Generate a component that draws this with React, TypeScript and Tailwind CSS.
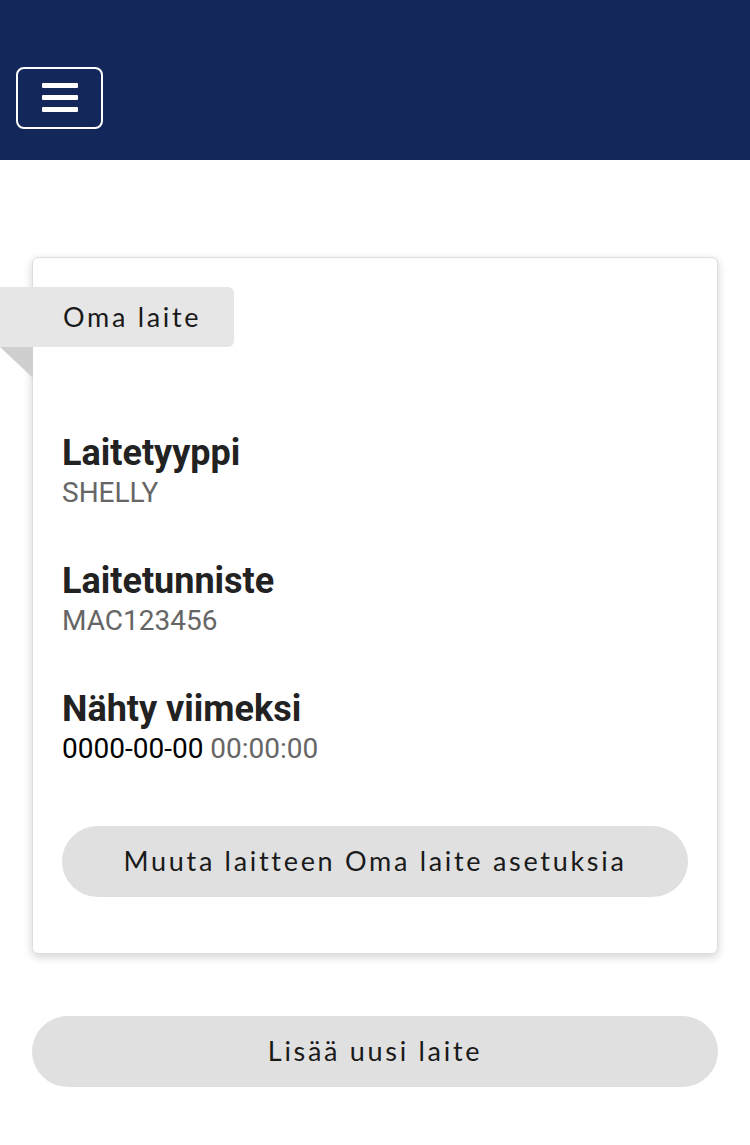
import React from 'react';

const fields = [
    {label: 'Laitetyyppi', value: 'SHELLY'},
    {label: 'Laitetunniste', value: 'MAC123456'},
];

const btnFont = "font-['Lato','Open_Sans',sans-serif]";

const App = () => {
    return (
        <div className="min-h-[1145px] bg-white font-['Roboto',sans-serif]">
            {/* Header */}
            <header className="h-[160px] bg-[#14275a] flex items-center pl-4 pt-[35px]">
                <button className="w-[87px] h-[62px] border-2 border-white rounded-lg flex flex-col items-center justify-center gap-[7px]">
                    <span className="block w-[36px] h-[5px] bg-white rounded-[1px]"/>
                    <span className="block w-[36px] h-[5px] bg-white rounded-[1px]"/>
                    <span className="block w-[36px] h-[5px] bg-white rounded-[1px]"/>
                </button>
            </header>

            <main className="px-[32px] pt-[97px]">
                {/* Card */}
                <div className="bg-white border border-[#dedede] rounded-md shadow-[0_3px_10px_rgba(0,0,0,0.18)] pt-[29px] pb-[56px]">
                    <div className="-ml-[33px]">
                        <div className={`w-[234px] h-[60px] bg-[#e6e6e6] rounded-r-md flex items-center pl-[63px] text-[27px] tracking-[0.1em] text-[#1a1a1a] ${btnFont}`}>
                            Oma laite
                        </div>
                        <div className="w-0 h-0 border-t-[31px] border-t-[#cfcfcf] border-l-[33px] border-l-transparent"/>
                    </div>

                    <div className="px-[29px] mt-[52px]">
                        {fields.map((f) => (
                            <div key={f.label} className="mb-[48px]">
                                <div className="text-[36px] leading-[46px] font-bold text-[#222]">{f.label}</div>
                                <div className="text-[28px] leading-[34px] text-[#666]">{f.value}</div>
                            </div>
                        ))}
                        <div>
                            <div className="text-[36px] leading-[46px] font-bold text-[#222]">Nähty viimeksi</div>
                            <div className="text-[28px] leading-[34px] text-black">
                                0000-00-00 <span className="text-[#666]">00:00:00</span>
                            </div>
                        </div>

                        <button className={`mt-[60px] w-full h-[71px] rounded-full bg-[#e0e0e0] text-[27px] tracking-[0.1em] text-[#1a1a1a] ${btnFont}`}>
                            Muuta laitteen Oma laite asetuksia
                        </button>
                    </div>
                </div>

                <button className={`mt-[62px] w-full h-[71px] rounded-full bg-[#e0e0e0] text-[27px] tracking-[0.1em] text-[#1a1a1a] ${btnFont}`}>
                    Lisää uusi laite
                </button>
            </main>
        </div>
    );
};

export default App;
